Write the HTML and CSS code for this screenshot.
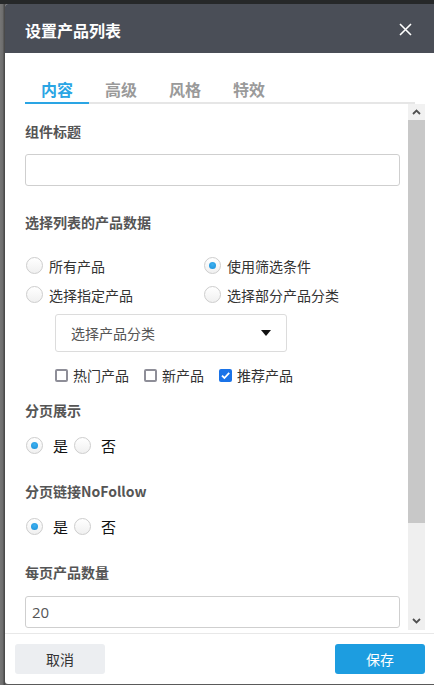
FILE: index.html
```html
<!DOCTYPE html>
<html lang="zh-CN">
<head>
<meta charset="utf-8">
<title>设置产品列表</title>
<link rel="stylesheet" href="styles.css">
</head>
<body>
<div class="dialog">
  <div class="hd">
    <span class="title">设置产品列表</span>
    <svg class="close" width="13" height="13" viewBox="0 0 13 13"><path d="M1 1L12 12M12 1L1 12" stroke="#fff" stroke-width="1.6" fill="none"/></svg>
  </div>
  <div class="tabs">
    <span class="tab active">内容</span>
    <span class="tab">高级</span>
    <span class="tab">风格</span>
    <span class="tab">特效</span>
  </div>
  <div class="body">
    <div class="content">
      <div class="label l1">组件标题</div>
      <div class="input i1"></div>

      <div class="label l2">选择列表的产品数据</div>
      <div class="radio-grid">
        <span class="radio"><i class="circle"></i>所有产品</span>
        <span class="radio"><i class="circle on"></i>使用筛选条件</span>
        <span class="radio"><i class="circle"></i>选择指定产品</span>
        <span class="radio"><i class="circle"></i>选择部分产品分类</span>
      </div>
      <div class="select"><span>选择产品分类</span><i class="caret"></i></div>
      <div class="checks">
        <span class="check"><i class="box"></i>热门产品</span>
        <span class="check"><i class="box"></i>新产品</span>
        <span class="check"><i class="box on"><svg width="13" height="13" viewBox="0 0 13 13"><path d="M3 6.6L5.4 9L10.2 3.8" stroke="#fff" stroke-width="1.8" fill="none"/></svg></i>推荐产品</span>
      </div>

      <div class="label l3">分页展示</div>
      <div class="yesno">
        <span class="yn"><i class="circle on"></i>是</span>
        <span class="yn"><i class="circle"></i>否</span>
      </div>

      <div class="label l4">分页链接NoFollow</div>
      <div class="yesno">
        <span class="yn"><i class="circle on"></i>是</span>
        <span class="yn"><i class="circle"></i>否</span>
      </div>

      <div class="label l5">每页产品数量</div>
      <div class="input i2">20</div>
    </div>
    <div class="sbar">
      <div class="sb-btn"><svg width="9" height="6" viewBox="0 0 9 6"><path d="M1 5L4.5 1.5L8 5" stroke="#505050" stroke-width="1.8" fill="none"/></svg></div>
      <div class="sb-thumb"></div>
      <div class="sb-track"><svg width="9" height="6" viewBox="0 0 9 6"><path d="M1 1L4.5 4.5L8 1" stroke="#505050" stroke-width="1.8" fill="none"/></svg></div>
    </div>
  </div>
  <div class="ft">
    <button class="btn cancel">取消</button>
    <button class="btn save">保存</button>
  </div>
</div>
</body>
</html>
```
FILE: styles.css
```css
* { box-sizing: border-box; }
html, body { margin: 0; padding: 0; }
body {
  width: 434px;
  height: 685px;
  overflow: hidden;
  padding: 4px 0 0 5px;
  background:
    linear-gradient(#262829, #262829) top left / 100% 4px no-repeat,
    linear-gradient(90deg, #767676 0, #6c6c6c 3px, #4a4a4a 4px, #4a4a4a 5px) left / 5px 100% no-repeat,
    #5a5a5a;
  font-family: "Noto Sans CJK SC", "Open Sans", sans-serif;
}
.dialog {
  width: 429px;
  height: 680px;
  background: #fff;
  border-radius: 3px 0 0 3px;
  display: flex;
  flex-direction: column;
  overflow: hidden;
}
.hd {
  height: 49px;
  flex: none;
  background: #4a4e57;
  display: flex;
  align-items: center;
  justify-content: space-between;
  padding: 0 22px 0 20px;
}
.title {
  color: #fff;
  font-size: 16px;
  font-weight: bold;
  line-height: 20px;
  margin-top: 2px;
}
.close { display: block; margin-top: 1px; }
.tabs {
  flex: none;
  height: 51px;
  margin: 0 19px 0 20px;
  padding-top: 25px;
  display: flex;
  background: linear-gradient(#e6e6e6, #e6e6e6) bottom / 100% 2px no-repeat;
}
.tab {
  font-size: 16px;
  line-height: 22px;
  padding: 0 16px 2px;
  color: #9a9a9a;
  border-bottom: 2px solid transparent;
  font-weight: 600;
}
.tab.active { color: #2aa5e4; border-bottom-color: #2aa5e4; }
.body {
  flex: none;
  height: 529px;
  display: flex;
  padding-right: 9px;
}
.content {
  flex: 1;
  padding: 17px 8px 0 20px;
  overflow: hidden;
  color: #333;
  font-size: 14px;
}
.label {
  font-size: 14px;
  font-weight: bold;
  line-height: 20px;
  color: #555;
}
.l2 { margin-top: 26px; }
.l3 { margin-top: 15px; }
.l4 { margin-top: 21px; }
.l5 { margin-top: 21px; }
.input {
  height: 32px;
  border: 1px solid #cfcfcf;
  border-radius: 3px;
  padding-left: 6px;
  line-height: 30px;
  color: #555;
  font-family: "Open Sans", "Noto Sans CJK SC", sans-serif;
  font-size: 15px;
}
.i1 { margin-top: 13px; }
.i2 { margin-top: 14px; }
.radio-grid {
  margin-top: 19px;
  display: grid;
  grid-template-columns: 178px 1fr;
  grid-auto-rows: 29px;
}
.radio, .yn {
  display: flex;
  align-items: center;
  font-size: 14px;
  color: #333;
}
.circle {
  width: 17px;
  height: 17px;
  border-radius: 50%;
  border: 1px solid #cdcdcd;
  background: linear-gradient(#ffffff, #f0f0f0);
  margin: 0 6px 0 1px;
  flex: none;
  display: flex;
  align-items: center;
  justify-content: center;
}
.circle.on::after {
  content: "";
  width: 7px;
  height: 7px;
  border-radius: 50%;
  background: radial-gradient(circle at 50% 35%, #3db0f0, #1a8fd8);
}
.select {
  margin: 5px 0 0 30px;
  width: 232px;
  height: 38px;
  border: 1px solid #dcdcdc;
  border-radius: 3px;
  display: flex;
  align-items: center;
  justify-content: space-between;
  padding: 0 15px 0 15px;
  color: #555;
  font-size: 14px;
}
.caret {
  width: 0;
  height: 0;
  border-left: 5px solid transparent;
  border-right: 5px solid transparent;
  border-top: 6px solid #111;
}
.checks {
  margin: 13px 0 0 30px;
  display: flex;
  gap: 15px;
  height: 20px;
  align-items: center;
}
.check {
  display: flex;
  align-items: center;
  font-size: 14px;
  color: #333;
  line-height: 20px;
}
.box {
  width: 13px;
  height: 13px;
  border: 2px solid #8e8e98;
  border-radius: 2px;
  background: #fff;
  margin-right: 5px;
  flex: none;
  display: flex;
  align-items: center;
  justify-content: center;
}
.box.on {
  border: none;
  background: #1a73e8;
}
.box svg { display: block; }
.yesno {
  margin-top: 11px;
  height: 29px;
  display: flex;
  align-items: center;
  gap: 6px;
}
.yn .circle { margin-right: 10px; }
.yn { color: #111; font-size: 15px; }
.yn + .yn .circle { margin-left: 0; }
.sbar {
  width: 17px;
  height: 526px;
  flex: none;
  display: flex;
  flex-direction: column;
}
.sb-btn {
  height: 16px;
  background: #f1f1f1;
  display: flex;
  align-items: center;
  justify-content: center;
}
.sb-btn svg, .sb-track svg { display: block; }
.sb-thumb {
  height: 403px;
  background: #c8c8c8;
}
.sb-track {
  flex: 1;
  background: #efefef;
  display: flex;
  align-items: flex-end;
  justify-content: center;
  padding-bottom: 6px;
}
.ft {
  flex: none;
  border-top: 1px solid #e8e8e8;
  padding: 10px 9px 10px 10px;
  display: flex;
  justify-content: space-between;
}
.btn {
  width: 90px;
  height: 30px;
  border: none;
  border-radius: 3px;
  font-family: "Noto Sans CJK SC", sans-serif;
  font-size: 14px;
  padding: 0;
}
.cancel { background: #eceef1; color: #333; }
.save { background: #1d9de0; color: #fff; }
```
